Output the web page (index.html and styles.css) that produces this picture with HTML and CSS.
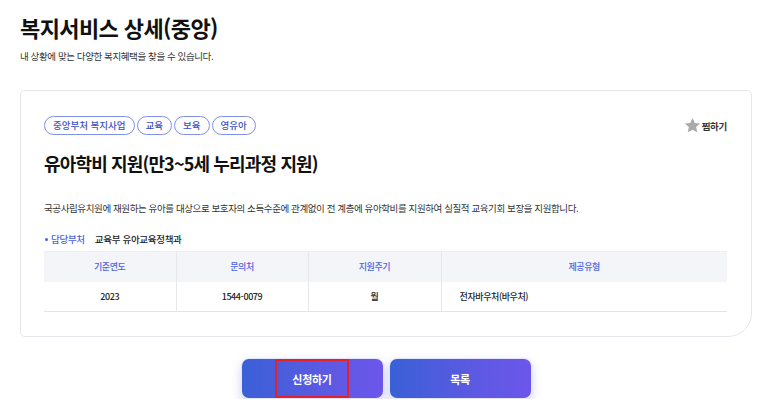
FILE: index.html
```html
<!DOCTYPE html>
<html lang="ko">
<head>
<meta charset="utf-8">
<title>복지서비스 상세(중앙)</title>
<link rel="stylesheet" href="styles.css">
</head>
<body>
<div class="page">
  <h1 class="page-title">복지서비스 상세(중앙)</h1>
  <p class="page-sub">내 상황에 맞는 다양한 복지혜택을 찾을 수 있습니다.</p>

  <section class="card">
    <div class="card-top">
      <ul class="tags">
        <li class="tag">중앙부처 복지사업</li>
        <li class="tag">교육</li>
        <li class="tag">보육</li>
        <li class="tag">영유아</li>
      </ul>
      <button class="fav" type="button">
        <svg class="fav-icon" viewBox="0 0 24 24" width="17" height="17" aria-hidden="true">
          <path d="M12 1.4l3.2 6.9 7.5.8-5.6 5.1 1.6 7.4L12 17.9l-6.7 3.7 1.6-7.4-5.6-5.1 7.5-.8z" fill="#a9a9a9"/>
        </svg>
        <span>찜하기</span>
      </button>
    </div>

    <h2 class="svc-title">유아학비 지원(만3~5세 누리과정 지원)</h2>
    <p class="svc-desc">국공사립유치원에 재원하는 유아를 대상으로 보호자의 소득수준에 관계없이 전 계층에 유아학비를 지원하여 실질적 교육기회 보장을 지원합니다.</p>

    <p class="dept"><span class="dept-label">담당부처</span><span class="dept-value">교육부 유아교육정책과</span></p>

    <table class="info">
      <colgroup>
        <col class="c1"><col class="c2"><col class="c3"><col class="c4">
      </colgroup>
      <thead>
        <tr><th>기준연도</th><th>문의처</th><th>지원주기</th><th>제공유형</th></tr>
      </thead>
      <tbody>
        <tr><td>2023</td><td>1544-0079</td><td>월</td><td class="left">전자바우처(바우처)</td></tr>
      </tbody>
    </table>
  </section>

  <div class="actions">
    <button class="btn" type="button"><span class="btn-mark">신청하기</span></button>
    <button class="btn" type="button"><span>목록</span></button>
  </div>
</div>
</body>
</html>
```

FILE: styles.css
```css
* { box-sizing: border-box; }

body {
  margin: 0;
  background: #ffffff;
  font-family: "Noto Sans CJK KR", "Noto Sans", sans-serif;
  color: #222;
}

.page {
  padding: 12px 21px 0 20px;
}

.page-title {
  margin: 0;
  font-size: 22px;
  line-height: 30px;
  font-weight: 700;
  letter-spacing: -0.6px;
  color: #111;
}

.page-sub {
  margin: 7px 0 0;
  font-size: 9.5px;
  line-height: 14px;
  letter-spacing: -0.4px;
  color: #333;
}

.card {
  margin-top: 27px;
  border: 1px solid #e6e7ec;
  border-radius: 5px 5px 24px 5px;
  padding: 25px 24px 24px 23px;
}

.card-top {
  display: flex;
  align-items: center;
  justify-content: space-between;
}

.tags {
  display: flex;
  gap: 2px;
  margin: 0;
  padding: 0;
  list-style: none;
}

.tag {
  height: 19px;
  padding: 0 8px;
  border: 1px solid #8090e9;
  border-radius: 10px;
  font-size: 9.5px;
  line-height: 17px;
  letter-spacing: 0;
  font-weight: 500;
  color: #3d50c6;
}

.fav {
  display: flex;
  align-items: center;
  gap: 1px;
  margin: 0;
  padding: 0;
  border: 0;
  background: none;
  font-family: inherit;
  font-size: 9.5px;
  font-weight: 700;
  letter-spacing: -0.3px;
  color: #333;
}

.fav-icon { display: block; }

.svc-title {
  margin: 16px 0 0;
  font-size: 18px;
  line-height: 24px;
  font-weight: 700;
  letter-spacing: -0.85px;
  color: #111;
}

.svc-desc {
  margin: 26px 0 0;
  font-size: 9.5px;
  line-height: 14px;
  letter-spacing: -0.4px;
  color: #333;
}

.dept {
  display: flex;
  align-items: center;
  margin: 17px 0 0;
  font-size: 9.5px;
  line-height: 14px;
  letter-spacing: -0.3px;
  font-weight: 500;
}

.dept-label {
  position: relative;
  padding-left: 7px;
  color: #4a5fdc;
}

.dept-label::before {
  content: "";
  position: absolute;
  left: 1px;
  top: 6px;
  width: 3px;
  height: 3px;
  border-radius: 50%;
  background: #4a5fdc;
}

.dept-value {
  margin-left: 10px;
  color: #222;
}

.info {
  width: 683px;
  margin-top: 5px;
  border-collapse: collapse;
  table-layout: fixed;
  font-size: 9px;
  letter-spacing: -0.4px;
}

.c1 { width: 132px; }
.c2 { width: 132px; }
.c3 { width: 133px; }
.c4 { width: 286px; }

.info th,
.info td {
  height: 30px;
  padding: 0;
  text-align: center;
  vertical-align: middle;
  border-left: 1px solid #e6e7ec;
}

.info th:first-child,
.info td:first-child { border-left: 0; }

.info th {
  background: #f4f5f9;
  font-weight: 500;
  color: #4e62dd;
  border-top: 1px solid #eceef3;
}

.info td {
  font-weight: 500;
  color: #222;
  border-bottom: 1px solid #e3e4e9;
}

.info td.left {
  text-align: left;
  padding-left: 18px;
}

.actions {
  display: flex;
  justify-content: center;
  gap: 5px;
  margin-top: 21px;
}

.btn {
  display: flex;
  align-items: center;
  justify-content: center;
  width: 143px;
  height: 41px;
  padding: 0;
  border: 1px solid rgba(255, 255, 255, 0.85);
  border-radius: 8px;
  background: linear-gradient(90deg, #3a60d6 0%, #5a5ae2 55%, #6c56ea 100%);
  box-shadow: 0 4px 10px rgba(88, 92, 220, 0.28);
  font-family: inherit;
  font-size: 11px;
  font-weight: 700;
  letter-spacing: -0.3px;
  color: #fff;
}

.btn-mark {
  display: flex;
  align-items: center;
  height: 39px;
  padding: 0 15px;
  border: 2px solid #e3202b;
}
```
